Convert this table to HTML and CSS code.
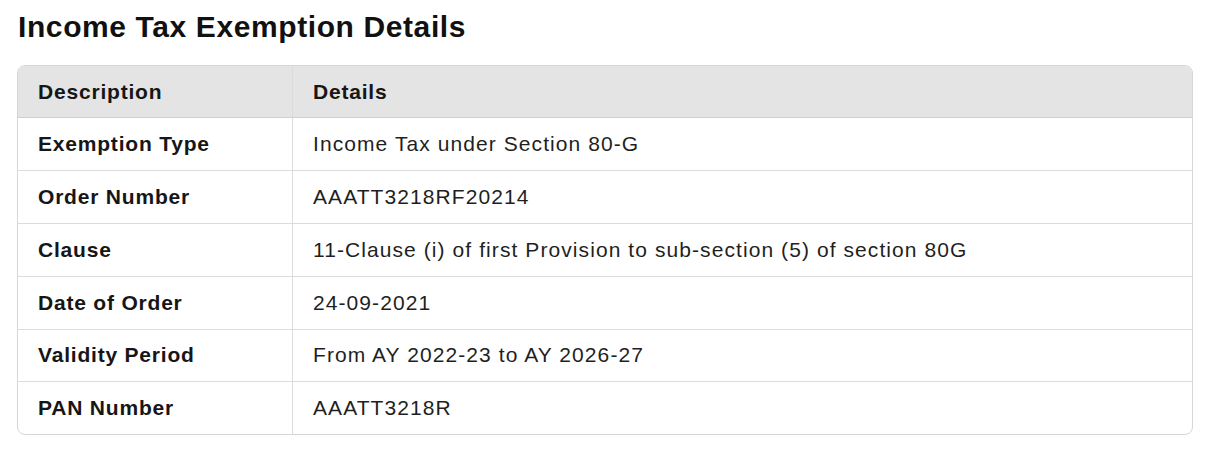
FILE: index.html
```html
<!DOCTYPE html>
<html>
<head>
<meta charset="utf-8">
<link rel="stylesheet" href="styles.css">
</head>
<body>
<section class="panel">
  <h2 class="title">Income Tax Exemption Details</h2>
  <div class="table-wrap">
    <table class="details">
      <thead>
        <tr><th class="col-desc">Description</th><th>Details</th></tr>
      </thead>
      <tbody>
        <tr><td class="label">Exemption Type</td><td>Income Tax under Section 80-G</td></tr>
        <tr><td class="label">Order Number</td><td>AAATT3218RF20214</td></tr>
        <tr><td class="label">Clause</td><td>11-Clause (i) of first Provision to sub-section (5) of section 80G</td></tr>
        <tr><td class="label">Date of Order</td><td>24-09-2021</td></tr>
        <tr><td class="label">Validity Period</td><td>From AY 2022-23 to AY 2026-27</td></tr>
        <tr><td class="label">PAN Number</td><td>AAATT3218R</td></tr>
      </tbody>
    </table>
  </div>
</section>
</body>
</html>
```
FILE: styles.css
```css
html, body {
  margin: 0;
  padding: 0;
  background: #ffffff;
}
body {
  font-family: "Liberation Sans", Arial, sans-serif;
  color: #1a1a1a;
}
.panel {
  padding: 9px 32px 0 17px;
}
.title {
  margin: 0 0 20px 1px;
  font-size: 30px;
  line-height: 36px;
  font-weight: 700;
  letter-spacing: 0.6px;
  color: #111111;
}
.table-wrap {
  border: 1px solid #d6d6d6;
  border-radius: 8px;
  overflow: hidden;
}
.details {
  width: 100%;
  border-collapse: collapse;
  font-size: 21px;
}
.details th, .details td {
  text-align: left;
  padding: 0 20px;
  height: 51.8px;
  border-bottom: 1px solid #dcdcdc;
  border-right: 1px solid #dcdcdc;
  letter-spacing: 1.08px;
}
.details th:last-child, .details td:last-child {
  border-right: none;
}
.details tbody tr:last-child td {
  border-bottom: none;
}
.details thead th {
  background: #e4e4e4;
  font-weight: 700;
  color: #161616;
  letter-spacing: 0.8px;
  height: 51.4px;
  border-bottom-color: #d0d0d0;
}
.col-desc {
  width: 234px;
}
.details td.label {
  font-weight: 700;
  color: #161616;
  letter-spacing: 0.8px;
}
.details td {
  color: #1f1f1f;
}
```
